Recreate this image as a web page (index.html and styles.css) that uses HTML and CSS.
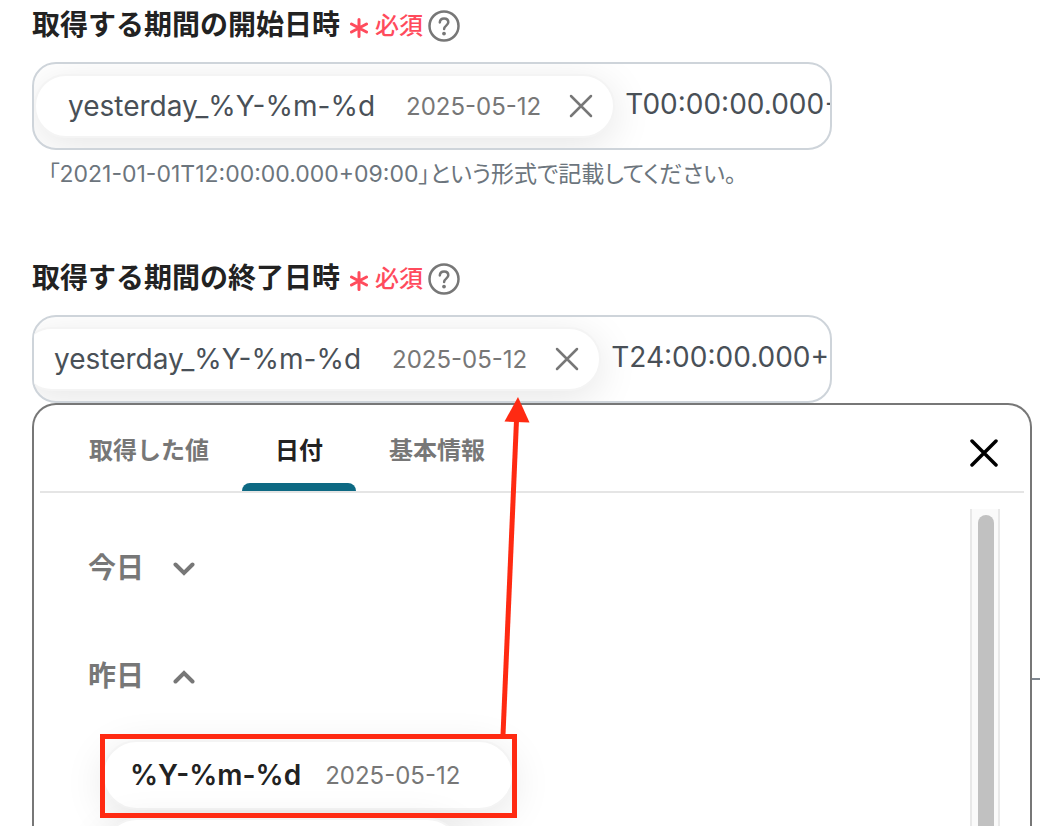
FILE: index.html
```html
<!DOCTYPE html>
<html lang="ja">
<head>
  <meta charset="UTF-8" />
  <meta name="viewport" content="width=device-width, initial-scale=1.0"/>
  <title>取得する期間</title>
  <link rel="stylesheet" href="styles.css">
</head>
<body>
  <form class="page">
    <div class="field">
      <div class="field-head">
        <label for="startAt">取得する期間の開始日時</label>
        <svg class="asterisk" viewBox="0 0 18 20"><path d="M9 1.500v17M1.500 6l15 8M16.500 6l-15 8"/></svg>
        <span class="required">必須</span>
        <button type="button" class="help" aria-label="ヘルプ">
          <svg viewBox="0 0 32 32"><circle cx="16" cy="16" r="14.500"/><path d="M11.800 12.400c.2-2.400 2-3.900 4.300-3.900 2.400 0 4.200 1.500 4.200 3.800 0 3.300-4.200 3.400-4.200 6.700"/><circle class="dot" cx="16" cy="23.600" r="1.900"/></svg>
        </button>
      </div>
      <div class="token-input">
        <span class="token">
          <span class="token-name">yesterday_%Y-%m-%d</span>
          <span class="token-date">2025-05-12</span>
          <button type="button" class="token-remove" aria-label="削除">
            <svg viewBox="0 0 24 24"><path d="M2 2l20 20M22 2L2 22"/></svg>
          </button>
        </span>
        <input type="text" id="startAt" value="T00:00:00.000+09:00" />
      </div>
      <p class="hint">「2021-01-01T12:00:00.000+09:00」という形式で記載してください。</p>
    </div>

    <div class="field">
      <div class="field-head">
        <label for="endAt">取得する期間の終了日時</label>
        <svg class="asterisk" viewBox="0 0 18 20"><path d="M9 1.500v17M1.500 6l15 8M16.500 6l-15 8"/></svg>
        <span class="required">必須</span>
        <button type="button" class="help" aria-label="ヘルプ">
          <svg viewBox="0 0 32 32"><circle cx="16" cy="16" r="14.500"/><path d="M11.800 12.400c.2-2.400 2-3.900 4.300-3.900 2.400 0 4.200 1.500 4.200 3.800 0 3.300-4.200 3.400-4.200 6.700"/><circle class="dot" cx="16" cy="23.600" r="1.900"/></svg>
        </button>
      </div>
      <div class="token-input scrolled">
        <span class="token">
          <span class="token-name">yesterday_%Y-%m-%d</span>
          <span class="token-date">2025-05-12</span>
          <button type="button" class="token-remove" aria-label="削除">
            <svg viewBox="0 0 24 24"><path d="M2 2l20 20M22 2L2 22"/></svg>
          </button>
        </span>
        <input type="text" id="endAt" value="T24:00:00.000+09:00" />
      </div>
    </div>

    <section class="picker">
      <div class="picker-head">
        <nav class="tabs">
          <button type="button" class="tab">取得した値</button>
          <button type="button" class="tab active">日付</button>
          <button type="button" class="tab">基本情報</button>
        </nav>
        <button type="button" class="close" aria-label="閉じる">
          <svg viewBox="0 0 28 28"><path d="M2 2l24 24M26 2L2 26"/></svg>
        </button>
      </div>
      <div class="picker-body">
        <div class="groups">
          <button type="button" class="group">今日
            <svg viewBox="0 0 22 14"><path d="M2.500 2.500l8.500 8.500 8.500-8.500"/></svg>
          </button>
          <button type="button" class="group">昨日
            <svg viewBox="0 0 22 14"><path d="M2.500 11.500L11 3l8.500 8.500"/></svg>
          </button>
          <div class="options">
            <button type="button" class="option">
              <span class="option-name">%Y-%m-%d</span>
              <span class="token-date">2025-05-12</span>
            </button>
            <button type="button" class="option short" aria-label="昨日の日付"></button>
          </div>
        </div>
        <div class="scrollbar"><div class="thumb"></div></div>
      </div>
    </section>

    <div class="connector"></div>
    <svg class="annotation" viewBox="0 0 1040 826">
      <rect x="102.500" y="736.500" width="412" height="79"/>
      <path d="M503 735L516.500 420"/>
      <path class="tip" d="M518 397l11.500 25.500-25-1z"/>
    </svg>
  </form>
</body>
</html>
```

FILE: styles.css
```css
* {
  box-sizing: border-box;
}
body {
  margin: 0;
  background: #fff;
  color: #222;
  font-family: Inter, 'Noto Sans CJK JP', sans-serif;
}
button {
  border: none;
  background: none;
  padding: 0;
  color: inherit;
  font-family: inherit;
  cursor: pointer;
}
svg {
  display: block;
  fill: none;
  stroke: currentColor;
  stroke-linecap: round;
}
.page {
  position: relative;
  display: flex;
  flex-direction: column;
  height: 100vh;
  padding: 6px 8px 0 32px;
  overflow: hidden;
}

/* fields */
.field {
  width: 100%;
  max-width: 800px;
}
.field + .field {
  margin-top: 69px;
}
.field-head {
  display: flex;
  align-items: center;
  height: 40px;
  margin-bottom: 16px;
}
.field-head label {
  margin-right: 10px;
  padding-bottom: 2px;
  font-size: 28px;
  line-height: 36px;
  font-weight: 700;
}
.asterisk {
  width: 18px;
  height: 20px;
  margin: 3px 7px 0 0;
  color: #ff4b5c;
  stroke-width: 3;
}
.required {
  margin-right: 5px;
  color: #ff4b5c;
  font-size: 24px;
  line-height: 36px;
  font-weight: 500;
}
.help {
  color: #777;
}
.help svg {
  width: 32px;
  height: 32px;
  stroke-width: 2.5;
}
.help .dot {
  fill: currentColor;
  stroke: none;
}
.token-input {
  display: flex;
  align-items: center;
  height: 88px;
  border: 2px solid #ced4da;
  border-radius: 24px;
  color: #495057;
  overflow: hidden;
}
.token {
  display: flex;
  flex: none;
  align-items: center;
  height: 64px;
  padding: 0 20px 0 32px;
  border: 2px solid #f4f4f4;
  border-radius: 32px;
  background: #fff;
  box-shadow: 0 8px 40px rgba(0, 0, 0, 0.1);
}
.scrolled .token {
  margin-left: -14px;
}
.token-name {
  margin-right: 31px;
  font-size: 28px;
}
.token-date {
  color: #777;
  font-size: 24px;
}
.token-remove {
  margin-left: 28px;
  color: #777;
}
.token-remove svg {
  width: 24px;
  height: 24px;
  stroke-width: 2.5;
}
.token-input input {
  flex: 1;
  min-width: 0;
  margin-left: 10px;
  padding: 0 0 4px;
  border: none;
  outline: none;
  background: none;
  color: inherit;
  font-family: inherit;
  font-size: 28px;
  position: relative;
}
.hint {
  margin: 8px 16px 0;
  color: #6c757d;
  font-size: 23px;
  line-height: 32px;
  font-feature-settings: "palt";
}

/* value picker */
.picker {
  display: flex;
  flex: 1;
  flex-direction: column;
  min-height: 0;
  border: 2px solid #777;
  border-bottom: none;
  border-radius: 24px 24px 0 0;
  background: #fff;
}
.picker-head {
  display: flex;
  justify-content: space-between;
  margin: 0 6px;
  padding-right: 26px;
  border-bottom: 2px solid #e5e5e5;
}
.tabs {
  display: flex;
  padding-left: 16px;
}
.tab {
  height: 86px;
  padding: 8px 33px 0;
  border-bottom: 8px solid transparent;
  color: #777;
  font-size: 24px;
  font-weight: 700;
}
.tab.active {
  position: relative;
  color: #222;
}
.tab.active::after {
  content: "";
  position: absolute;
  left: 0;
  right: 0;
  bottom: -8px;
  height: 8px;
  border-radius: 8px 8px 0 0;
  background: #0d6983;
}
.close {
  padding-top: 10px;
  color: #000;
}
.close svg {
  width: 28px;
  height: 28px;
  stroke-width: 3.5;
}
.picker-body {
  display: flex;
  flex: 1;
  justify-content: space-between;
  min-height: 0;
  padding: 16px 30px 0 54px;
}
.group {
  display: flex;
  gap: 29px;
  align-items: center;
  height: 108px;
  padding-top: 6px;
  color: #777;
  font-size: 28px;
  font-weight: 700;
}
.group svg {
  width: 22px;
  height: 14px;
  margin-top: 6px;
  stroke-width: 4;
}
.options {
  display: flex;
  flex-direction: column;
  gap: 8px;
  align-items: flex-start;
  padding: 15px 0 0 14px;
}
.option {
  display: flex;
  gap: 24px;
  align-items: center;
  height: 70px;
  padding: 0 52px 0 26px;
  border: 2px solid #f4f4f4;
  border-radius: 36px;
  background: #fff;
  box-shadow: 0 8px 40px rgba(0, 0, 0, 0.1);
}
.option-name {
  font-size: 28px;
  font-weight: 600;
}
.option.short {
  width: 360px;
}
.scrollbar {
  width: 30px;
  padding: 6px 4px 0 6px;
  border: solid #e8e8e8;
  border-width: 0 2px;
  background: #fafafa;
}
.thumb {
  width: 16px;
  height: 100%;
  border-radius: 8px 8px 0 0;
  background: #c1c1c1;
}

/* line coming out of the panel, callout and arrow drawn over the form */
.connector {
  position: absolute;
  top: 678px;
  right: 0;
  width: 8px;
  height: 2px;
  background: #7f8790;
}
.annotation {
  position: absolute;
  top: 0;
  left: 0;
  width: 1040px;
  height: 826px;
  color: #ff2a12;
  stroke-width: 5;
  stroke-linecap: butt;
  pointer-events: none;
}
.annotation .tip {
  fill: currentColor;
  stroke: none;
}
```
